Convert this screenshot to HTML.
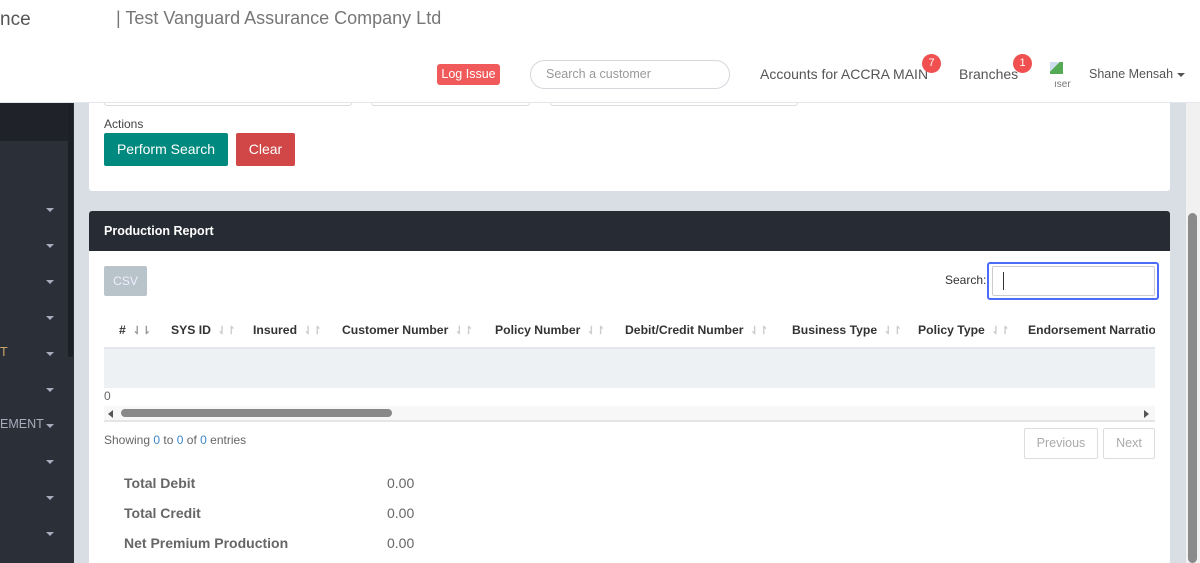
<!DOCTYPE html>
<html><head><meta charset="utf-8"><style>
*{box-sizing:border-box;margin:0;padding:0}
body{width:1200px;height:563px;overflow:hidden;position:relative;font-family:"Liberation Sans",sans-serif;background:#d9dee5;color:#555}
.abs{position:absolute}
.hdr{left:0;top:0;width:1200px;height:103px;background:#fff;border-bottom:1px solid #e3e6ea;z-index:5}
.side{left:0;top:103px;width:74px;height:460px;background:#2b3038}
.sidetop{left:0;top:103px;width:70px;height:38px;background:#1f2329}
.sbar{left:68px;top:103px;width:5px;height:254px;background:#1c2026;border-radius:2px}
.car{width:0;height:0;border-left:4px solid transparent;border-right:4px solid transparent;border-top:4px solid #aab;left:46px}
.card{background:#fff;border-radius:3px}
.th{top:323px;font-size:12.2px;font-weight:bold;color:#333;white-space:nowrap}
.sort{color:#ccc;font-size:11px;font-weight:bold}
</style></head><body>
<div class="abs hdr">
 <div class="abs" style="left:0;top:9px;font-size:19px;color:#555">nce</div>
 <div class="abs" style="left:116px;top:8px;font-size:18px;color:#777">| Test Vanguard Assurance Company Ltd</div>
 <div class="abs" style="left:437px;top:64px;width:63px;height:21px;background:#f05a5a;color:#fff;border-radius:3px;font-size:12.5px;text-align:center;line-height:21px">Log Issue</div>
 <div class="abs" style="left:530px;top:60px;width:200px;height:29px;border:1px solid #d5d8dc;border-radius:15px;font-size:12.5px;color:#999;padding:6px 15px">Search a customer</div>
 <div class="abs" style="left:760px;top:66px;font-size:14px;color:#555">Accounts for ACCRA MAIN</div>
 <div class="abs" style="left:922px;top:54px;width:19px;height:19px;border-radius:50%;background:#f05050;color:#fff;font-size:11px;text-align:center;line-height:19px">7</div>
 <div class="abs" style="left:959px;top:66px;font-size:14px;color:#555">Branches</div>
 <div class="abs" style="left:1013px;top:54px;width:19px;height:19px;border-radius:50%;background:#f05050;color:#fff;font-size:11px;text-align:center;line-height:19px">1</div>
 <div class="abs" style="left:1050px;top:62px;width:13px;height:12px;background:linear-gradient(135deg,#cde 40%,#5a5 40%)"></div>
 <div class="abs" style="left:1054px;top:79px;font-size:10px;color:#777">ıser</div>
 <div class="abs" style="left:1089px;top:67px;font-size:12.5px;color:#555">Shane Mensah</div>
 <div class="abs" style="left:1177px;top:73px;border-left:4px solid transparent;border-right:4px solid transparent;border-top:4px solid #555"></div>
</div>
<div class="abs side"></div><div class="abs sidetop"></div><div class="abs sbar"></div>
<div class="abs car" style="top:208px"></div><div class="abs car" style="top:244px"></div><div class="abs car" style="top:280px"></div><div class="abs car" style="top:316px"></div><div class="abs car" style="top:352px"></div><div class="abs car" style="top:388px"></div><div class="abs car" style="top:424px"></div><div class="abs car" style="top:460px"></div><div class="abs car" style="top:496px"></div><div class="abs car" style="top:532px"></div>
<div class="abs" style="left:0;top:345px;font-size:12.5px;color:#c9a66b">T</div>
<div class="abs" style="left:0;top:417px;font-size:12.5px;color:#aab">EMENT</div>
<div class="abs" style="left:1186px;top:103px;width:14px;height:460px;background:#f1f1f1"></div>
<div class="abs" style="left:1188px;top:213px;width:9px;height:350px;background:#8a8a8a;border-radius:5px"></div>
<div class="abs card" style="left:89px;top:90px;width:1081px;height:101px"></div>
<div class="abs" style="left:104px;top:96px;width:248px;height:10px;border:1px solid #ddd;border-top:none;border-radius:0 0 3px 3px"></div>
<div class="abs" style="left:371px;top:96px;width:159px;height:10px;border:1px solid #ddd;border-top:none;border-radius:0 0 3px 3px"></div>
<div class="abs" style="left:550px;top:96px;width:248px;height:10px;border:1px solid #ddd;border-top:none;border-radius:0 0 3px 3px"></div>
<div class="abs" style="left:104px;top:117px;font-size:12px;color:#444">Actions</div>
<div class="abs" style="left:104px;top:133px;width:124px;height:33px;background:#00897e;color:#fff;border-radius:2px;font-size:14px;text-align:center;line-height:33px">Perform Search</div>
<div class="abs" style="left:236px;top:133px;width:59px;height:33px;background:#d14646;color:#fff;border-radius:2px;font-size:14px;text-align:center;line-height:33px">Clear</div>
<div class="abs card" style="left:89px;top:211px;width:1081px;height:352px;border-radius:3px 3px 0 0"></div>
<div class="abs" style="left:89px;top:211px;width:1081px;height:40px;background:#272b33;border-radius:3px 3px 0 0;color:#fff;font-size:12.5px;font-weight:bold;padding:13px 15px">Production Report</div>
<div class="abs" style="left:104px;top:266px;width:43px;height:30px;background:#b9c3ca;color:#eef;border-radius:2px;font-size:12px;text-align:center;line-height:30px">CSV</div>
<div class="abs" style="left:945px;top:273px;font-size:12px;color:#333">Search:</div>
<div class="abs" style="left:987px;top:262px;width:172px;height:38px;border:2px solid #4a6cf7;border-radius:3px"></div>
<div class="abs" style="left:992px;top:266px;width:163px;height:30px;border:1px solid #ccc;border-radius:2px"></div>
<div class="abs" style="left:1003px;top:272px;width:1px;height:18px;background:#333"></div>
<div class="abs th" style="left:119px">#&nbsp; <span class="sort" style="color:#999">⇃⇂</span></div>
<div class="abs th" style="left:171px">SYS ID <span class="sort">&nbsp;⇃↾</span></div>
<div class="abs th" style="left:253px">Insured <span class="sort">&nbsp;⇃↾</span></div>
<div class="abs th" style="left:342px">Customer Number <span class="sort">&nbsp;⇃↾</span></div>
<div class="abs th" style="left:495px">Policy Number <span class="sort">&nbsp;⇃↾</span></div>
<div class="abs th" style="left:625px">Debit/Credit Number <span class="sort">&nbsp;⇃↾</span></div>
<div class="abs th" style="left:792px">Business Type <span class="sort">&nbsp;⇃↾</span></div>
<div class="abs th" style="left:918px">Policy Type <span class="sort">&nbsp;⇃↾</span></div>
<div class="abs" style="left:1028px;top:323px;width:127px;overflow:hidden;font-size:12.2px;font-weight:bold;color:#333;white-space:nowrap">Endorsement Narration</div>
<div class="abs" style="left:104px;top:347px;width:1051px;height:41px;background:#eef1f4;border-top:2px solid #e3e7eb"></div>
<div class="abs" style="left:104px;top:389px;font-size:12px;color:#666">0</div>
<div class="abs" style="left:104px;top:406px;width:1051px;height:16px;background:#f7f7f7;border-bottom:2px solid #e5e5e5"></div>
<div class="abs" style="left:108px;top:410px;border-top:4px solid transparent;border-bottom:4px solid transparent;border-right:5px solid #555"></div>
<div class="abs" style="left:1144px;top:410px;border-top:4px solid transparent;border-bottom:4px solid transparent;border-left:5px solid #555"></div>
<div class="abs" style="left:121px;top:409px;width:271px;height:8px;background:#888;border-radius:4px"></div>
<div class="abs" style="left:104px;top:433px;font-size:12px;color:#666">Showing <span style="color:#3a87c8">0</span> to <span style="color:#3a87c8">0</span> of <span style="color:#3a87c8">0</span> entries</div>
<div class="abs" style="left:1024px;top:428px;width:74px;height:31px;border:1px solid #ddd;border-radius:2px;font-size:12.5px;color:#aaa;text-align:center;line-height:29px">Previous</div>
<div class="abs" style="left:1103px;top:428px;width:52px;height:31px;border:1px solid #ddd;border-radius:2px;font-size:12.5px;color:#aaa;text-align:center;line-height:29px">Next</div>
<div class="abs" style="left:124px;top:475px;font-size:14px;font-weight:bold;color:#666">Total Debit</div>
<div class="abs" style="left:124px;top:505px;font-size:14px;font-weight:bold;color:#666">Total Credit</div>
<div class="abs" style="left:124px;top:535px;font-size:14px;font-weight:bold;color:#666">Net Premium Production</div>
<div class="abs" style="left:387px;top:475px;font-size:14px;color:#666">0.00</div>
<div class="abs" style="left:387px;top:505px;font-size:14px;color:#666">0.00</div>
<div class="abs" style="left:387px;top:535px;font-size:14px;color:#666">0.00</div>
</body></html>
